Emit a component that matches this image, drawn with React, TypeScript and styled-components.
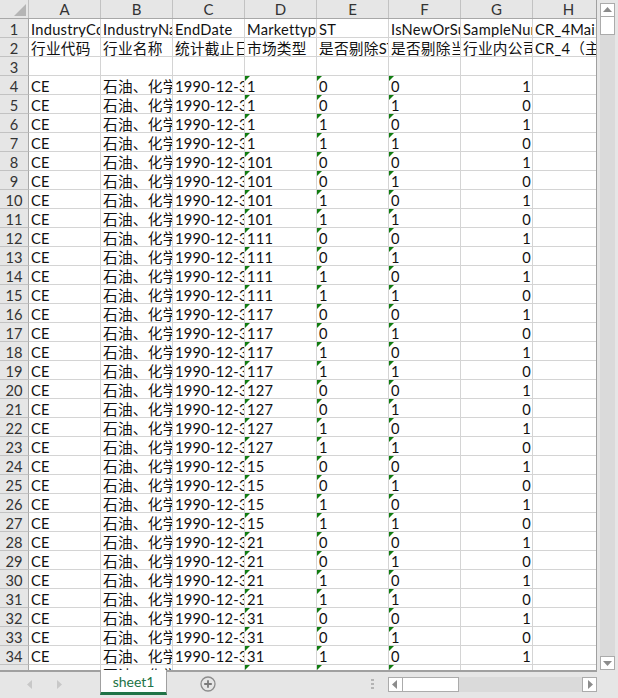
import React from "react";
import styled, { createGlobalStyle } from "styled-components";

const Global = createGlobalStyle`
  html, body { margin: 0; padding: 0; background: #e6e6e6; }
  #root { width: 618px; height: 698px; overflow: hidden; }
`;

const CELL_FONT = `"Lato", "Noto Sans CJK SC", sans-serif`;

const Window = styled.div`
  width: 618px;
  height: 698px;
  display: flex;
  flex-direction: column;
  background: #e6e6e6;
  font-family: ${CELL_FONT};
`;
const Main = styled.div`
  height: 672px;
  display: flex;
`;
const Sheet = styled.div`
  width: 597px;
  height: 672px;
  overflow: hidden;
  border-right: 1px solid #a0a0a0;
  border-bottom: 2px solid #a0a0a0;
  box-sizing: border-box;
  background: #fff;
`;
const HeadRow = styled.div`
  display: flex;
  height: 19px;
  background: #e6e6e6;
  border-bottom: 1px solid #a8a8a8;
  box-sizing: border-box;
`;
const Corner = styled.div`
  width: 29px;
  flex: none;
  position: relative;
  box-sizing: border-box;
  border-right: 1px solid #c0c0c0;
  svg { position: absolute; right: 2px; bottom: 2px; display: block; }
`;
const ColHead = styled.div`
  width: 72px;
  flex: none;
  box-sizing: border-box;
  border-right: 1px solid #c2c2c2;
  text-align: center;
  font-size: 15px;
  line-height: 18px;
  color: #333;
`;
const Row = styled.div`
  display: flex;
  height: 19px;
`;
const RowNum = styled.div`
  width: 29px;
  flex: none;
  box-sizing: border-box;
  background: #e6e6e6;
  border-right: 1px solid #a8a8a8;
  border-bottom: 1px solid #c2c2c2;
  padding-top: 2px;
  text-align: center;
  font-size: 14.67px;
  line-height: 18px;
  color: #333;
`;
const Cell = styled.div<{ $right?: boolean; $flag?: boolean }>`
  width: 72px;
  flex: none;
  box-sizing: border-box;
  position: relative;
  overflow: hidden;
  white-space: nowrap;
  padding: 2px ${(p) => (p.$right ? "1px" : "0")} 0 2px;
  text-align: ${(p) => (p.$right ? "right" : "left")};
  border-right: 1px solid #d4d4d4;
  border-bottom: 1px solid #d4d4d4;
  font-size: 14.67px;
  letter-spacing: 0.25px;
  line-height: 18px;
  color: #111;
  &::before {
    content: "";
    display: ${(p) => (p.$flag ? "block" : "none")};
    position: absolute;
    left: 0;
    top: 0;
    border-top: 5px solid #107c10;
    border-right: 5px solid transparent;
  }
`;
const VScroll = styled.div`
  flex: 1;
  display: flex;
  flex-direction: column;
  padding: 3px 3px 2px 3px;
`;
const ScrollBtn = styled.div`
  flex: none;
  box-sizing: border-box;
  background: #fff;
  border: 1px solid #ababab;
  display: flex;
  align-items: center;
  justify-content: center;
`;
const VBtn = styled(ScrollBtn)`
  height: 14px;
`;
const VThumb = styled.div`
  height: 18px;
  flex: none;
  box-sizing: border-box;
  background: #fff;
  border: 1px solid #ababab;
  border-top: none;
`;
const VTrack = styled.div`
  flex: 1;
  background: #dadada;
`;
const Footer = styled.div`
  flex: 1;
  display: flex;
  align-items: flex-start;
`;
const Nav = styled.div`
  width: 100px;
  flex: none;
  height: 24px;
  display: flex;
  align-items: center;
  box-sizing: border-box;
  padding-left: 27px;
  gap: 25px;
`;
const Tab = styled.div`
  width: 67px;
  height: 25px;
  margin-top: -2px;
  flex: none;
  box-sizing: border-box;
  background: #fff;
  border-left: 1px solid #a0a0a0;
  border-right: 1px solid #a0a0a0;
  border-bottom: 3px solid #217346;
  text-align: center;
  font-size: 14px;
  line-height: 24px;
  color: #217346;
`;
const AddBtn = styled.div`
  margin: 4px 0 0 33px;
  width: 16px;
  height: 16px;
  flex: none;
  svg { display: block; }
`;
const Grip = styled.div`
  margin: 7px 0 0 155px;
  width: 3px;
  flex: none;
  display: flex;
  flex-direction: column;
  gap: 2px;
  span { display: block; width: 3px; height: 2px; background: #b4b4b4; }
`;
const HScroll = styled.div`
  margin: 5px 0 0 14px;
  width: 209px;
  height: 15px;
  flex: none;
  display: flex;
`;
const HBtn = styled(ScrollBtn)`
  width: 15px;
`;
const HThumb = styled.div`
  width: 56px;
  flex: none;
  box-sizing: border-box;
  background: #fff;
  border: 1px solid #ababab;
  border-left: none;
`;
const HTrack = styled.div`
  flex: 1;
  background: #dadada;
`;

const cols = ["A", "B", "C", "D", "E", "F", "G", "H"];
const top1 = ["IndustryCode", "IndustryName", "EndDate", "Markettype", "ST", "IsNewOrSuspend", "SampleNumber", "CR_4Main"];
const top2 = ["行业代码", "行业名称", "统计截止日期", "市场类型", "是否剔除ST", "是否剔除当年", "行业内公司数", "CR_4（主营"];
const markets = ["1", "101", "111", "117", "127", "15", "21", "31"];
const combos: [string, string, string][] = [
  ["0", "0", "1"],
  ["0", "1", "0"],
  ["1", "0", "1"],
  ["1", "1", "0"],
];
const rows = Array.from({ length: 32 }, (_, i) => ({
  n: i + 4,
  market: markets[Math.floor(i / 4)],
  combo: combos[i % 4],
}));

const Tri = ({ d }: { d: string }) => (
  <svg width="9" height="9" viewBox="0 0 9 9">
    <path d={d} fill="#8c8c8c" />
  </svg>
);

export default function App() {
  return (
    <Window>
      <Global />
      <Main>
        <Sheet>
          <HeadRow>
            <Corner>
              <svg width="12" height="12" viewBox="0 0 12 12">
                <path d="M12 0V12H0Z" fill="#b5b5b5" />
              </svg>
            </Corner>
            {cols.map((c) => (
              <ColHead key={c}>{c}</ColHead>
            ))}
          </HeadRow>
          <Row>
            <RowNum>1</RowNum>
            {top1.map((t) => (
              <Cell key={t}>{t}</Cell>
            ))}
          </Row>
          <Row>
            <RowNum>2</RowNum>
            {top2.map((t) => (
              <Cell key={t}>{t}</Cell>
            ))}
          </Row>
          <Row>
            <RowNum>3</RowNum>
            {cols.map((c) => (
              <Cell key={c} />
            ))}
          </Row>
          {rows.map((r) => (
            <Row key={r.n}>
              <RowNum>{r.n}</RowNum>
              <Cell>CE</Cell>
              <Cell>石油、化学、塑胶、塑料</Cell>
              <Cell>1990-12-31</Cell>
              <Cell $flag>{r.market}</Cell>
              <Cell $flag>{r.combo[0]}</Cell>
              <Cell $flag>{r.combo[1]}</Cell>
              <Cell $right>{r.combo[2]}</Cell>
              <Cell />
            </Row>
          ))}
        </Sheet>
        <VScroll>
          <VBtn>
            <svg width="9" height="6" viewBox="0 0 9 6"><path d="M4.5 0L9 5H0Z" fill="#8c8c8c" /></svg>
          </VBtn>
          <VThumb />
          <VTrack />
          <VBtn>
            <svg width="9" height="6" viewBox="0 0 9 6"><path d="M0 1H9L4.5 6Z" fill="#8c8c8c" /></svg>
          </VBtn>
        </VScroll>
      </Main>
      <Footer>
        <Nav>
          <svg width="5" height="9" viewBox="0 0 5 9"><path d="M5 0V9L0 4.5Z" fill="#c8c8c8" /></svg>
          <svg width="5" height="9" viewBox="0 0 5 9"><path d="M0 0V9L5 4.5Z" fill="#c8c8c8" /></svg>
        </Nav>
        <Tab>sheet1</Tab>
        <AddBtn>
          <svg width="16" height="16" viewBox="0 0 16 16">
            <circle cx="8" cy="8" r="7" fill="none" stroke="#8c8c8c" strokeWidth="1.3" />
            <path d="M8 4.2V11.8M4.2 8H11.8" stroke="#7a7a7a" strokeWidth="1.8" />
          </svg>
        </AddBtn>
        <Grip>
          <span />
          <span />
          <span />
        </Grip>
        <HScroll>
          <HBtn><Tri d="M6 0V9L1 4.5Z" /></HBtn>
          <HThumb />
          <HTrack />
          <HBtn><Tri d="M3 0V9L8 4.5Z" /></HBtn>
        </HScroll>
      </Footer>
    </Window>
  );
}
